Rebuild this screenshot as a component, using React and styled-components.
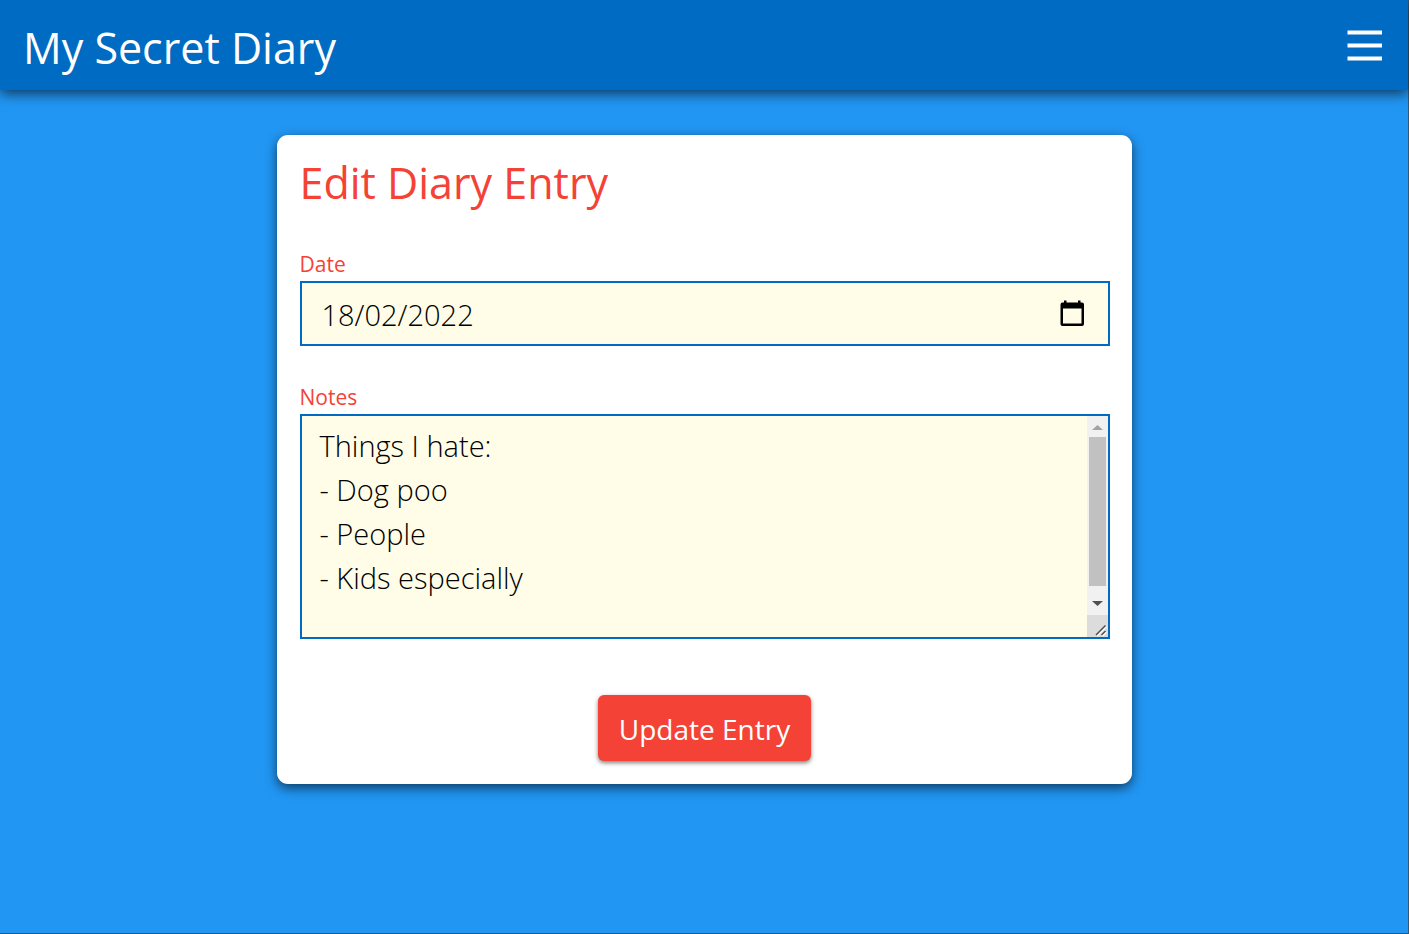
import React, { useState } from "react";
import styled, { createGlobalStyle } from "styled-components";

const GlobalStyle = createGlobalStyle`
  *, *::before, *::after { box-sizing: border-box; }
  body {
    margin: 0;
    background: #2196f3;
    font-family: "Segoe UI", "Open Sans", "Noto Sans", sans-serif;
  }
`;

const Page = styled.div`
  min-height: 100vh;
  background: #2196f3;
  border-right: 1px solid #30587b;
  border-bottom: 1px solid #30587b;
`;

const Header = styled.header`
  display: flex;
  align-items: center;
  justify-content: space-between;
  height: 90px;
  padding: 2px 24px 0 23px;
  background: #006bc2;
  color: #fff;
  box-shadow: 0 4px 12px rgba(0, 0, 0, 0.6);
`;

const Title = styled.h1`
  margin: 0;
  padding-top: 4px;
  font-size: 43px;
  font-weight: 400;
  line-height: 62px;
  color: ${({ $accent }) => ($accent ? "#f44336" : "inherit")};
`;

const MenuButton = styled.button`
  display: flex;
  padding: 0;
  border: 0;
  background: none;
  color: inherit;
  cursor: pointer;
`;

const Card = styled.form`
  display: flex;
  flex-direction: column;
  width: 100%;
  max-width: 855px;
  margin: 45px auto;
  padding: 13px 22px 23px 23px;
  background: #fff;
  border-radius: 11px;
  box-shadow: 0 4px 12px rgba(0, 0, 0, 0.6);
  ${Title} { margin: 0 0 34px; }
`;

const Field = styled.div`
  display: flex;
  flex-direction: column;
  margin-bottom: 35px;
`;

const Label = styled.label`
  font-size: 21px;
  line-height: 33px;
  color: #f44336;
`;

const ControlFrame = styled.div`
  display: flex;
  height: ${({ $height }) => $height}px;
  background: #fffde7;
  border: 2px solid #006bc2;
`;

const DateInput = styled.input`
  flex: 1;
  min-width: 0;
  padding: 2px 20px 0;
  border: 0;
  outline: 0;
  background: transparent;
  color: #000;
  font: 350 29px/44px "Segoe UI", "Open Sans", "Noto Sans", sans-serif;
`;

const PickerButton = styled.button`
  display: flex;
  align-items: center;
  padding: 0 22px 0 0;
  border: 0;
  background: none;
  color: #000;
`;

const NotesInput = styled.textarea`
  flex: 1;
  min-width: 0;
  padding: 8px 18px;
  border: 0;
  outline: 0;
  resize: none;
  overflow: hidden;
  background: transparent;
  color: #000;
  font: 350 29px/44px "Segoe UI", "Open Sans", "Noto Sans", sans-serif;
`;

const ScrollBar = styled.div`
  display: flex;
  flex-direction: column;
  width: 21px;
  background: #f1f1f1;
`;

const ScrollArrow = styled.svg`
  width: 21px;
  height: ${({ $height }) => $height}px;
`;

const ScrollThumb = styled.div`
  flex: 1;
  margin: 0 2px;
  background: #c1c1c1;
`;

const ResizeGrip = styled.svg`
  width: 21px;
  height: 22px;
  background: #dcdcdc;
`;

const SubmitButton = styled.button`
  align-self: center;
  height: 66px;
  margin-top: 21px;
  padding: 2px 21px 0;
  border: 0;
  border-radius: 6px;
  background: #f44336;
  color: #fff;
  font: 400 28px/44px "Segoe UI", "Open Sans", "Noto Sans", sans-serif;
  box-shadow: 0 2px 4px rgba(0, 0, 0, 0.5);
  cursor: pointer;
`;

export default function App() {
  const [date, setDate] = useState("18/02/2022");
  const [notes, setNotes] = useState(
    "Things I hate:\n- Dog poo\n- People\n- Kids especially"
  );

  return (
    <>
      <GlobalStyle />
      <Page>
        <Header>
          <Title>My Secret Diary</Title>
          <MenuButton type="button" aria-label="Menu">
            <svg width="38" height="32" viewBox="0 0 38 32" fill="currentColor">
              <path d="M1.5 0.500h34.500v4H1.500zM1.500 13.500h34.500v4H1.500zM1.500 26.500h34.500v4H1.500z" />
            </svg>
          </MenuButton>
        </Header>
        <Card onSubmit={(e) => e.preventDefault()}>
          <Title as="h2" $accent>Edit Diary Entry</Title>
          <Field>
            <Label htmlFor="date">Date</Label>
            <ControlFrame $height={65}>
              <DateInput
                id="date"
                type="text"
                value={date}
                onChange={(e) => setDate(e.target.value)}
              />
              <PickerButton type="button" aria-label="Pick a date">
                <svg width="26" height="28" viewBox="0 0 26 28">
                  <path
                    fill="currentColor"
                    fillRule="evenodd"
                    d="M4 0.500h2.500v2h11.500v-2h2.500v2h1.500q2 0 2 2v19.500q0 2-2 2H2.500q-2 0-2-2V4.500q0-2 2-2h1.500zM3 8.500v15h18.500v-15z"
                  />
                </svg>
              </PickerButton>
            </ControlFrame>
          </Field>
          <Field>
            <Label htmlFor="notes">Notes</Label>
            <ControlFrame $height={225}>
              <NotesInput
                id="notes"
                value={notes}
                onChange={(e) => setNotes(e.target.value)}
              />
              <ScrollBar aria-hidden="true">
                <ScrollArrow $height={21}>
                  <path d="M5 14l5.500-5 5.500 5z" fill="#a3a3a3" />
                </ScrollArrow>
                <ScrollThumb />
                <ScrollArrow $height={29}>
                  <path d="M5 15l5.500 5 5.500-5z" fill="#505050" />
                </ScrollArrow>
                <ResizeGrip>
                  <path d="M9 20L18.500 10.500M14.500 20L18.500 16" stroke="#fff" strokeWidth="1.500" transform="translate(1 1)" />
                  <path d="M9 20L18.500 10.500M14.500 20L18.500 16" stroke="#505050" strokeWidth="1.500" />
                </ResizeGrip>
              </ScrollBar>
            </ControlFrame>
          </Field>
          <SubmitButton type="submit">Update Entry</SubmitButton>
        </Card>
      </Page>
    </>
  );
}
